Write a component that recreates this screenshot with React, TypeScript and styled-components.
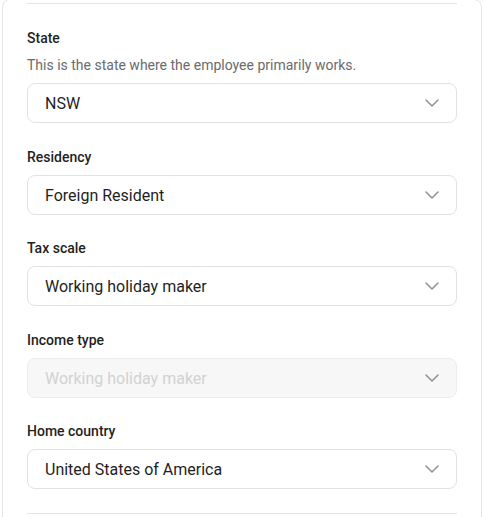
import React from "react";
import styled, { createGlobalStyle } from "styled-components";

const GlobalStyle = createGlobalStyle`
  body {
    margin: 0;
    background: #ffffff;
    font-family: Roboto, "Noto Sans", sans-serif;
  }
`;

type Field = {
  label: string;
  value: string;
  hint?: string;
  disabled?: boolean;
};

const fields: Field[] = [
  { label: "State", value: "NSW", hint: "This is the state where the employee primarily works." },
  { label: "Residency", value: "Foreign Resident" },
  { label: "Tax scale", value: "Working holiday maker" },
  { label: "Income type", value: "Working holiday maker", disabled: true },
  { label: "Home country", value: "United States of America" },
];

const Chevron = () => (
  <svg width="14" height="8" viewBox="0 0 14 8" fill="none">
    <path d="M1 1l6 6 6-6" stroke="#909090" strokeWidth="1.5" strokeLinecap="round" strokeLinejoin="round" />
  </svg>
);

export default function App() {
  return (
    <>
      <GlobalStyle />
      <Viewport>
        <Card>
          <Divider />
          <Fields>
            {fields.map((f) => (
              <FieldGroup key={f.label}>
                <Label>{f.label}</Label>
                {f.hint && <Hint>{f.hint}</Hint>}
                <Select $disabled={f.disabled}>
                  <Value>{f.value}</Value>
                  <Chevron />
                </Select>
              </FieldGroup>
            ))}
          </Fields>
          <Divider />
        </Card>
      </Viewport>
    </>
  );
}

const Viewport = styled.div`
  height: 517px;
  overflow: hidden;
`;

const Card = styled.div`
  margin: -1px 0 0 2px;
  width: 480px;
  min-height: 560px;
  border: 1px solid #e6e6e6;
  border-radius: 8px;
  padding: 3px 24px 0;
  box-sizing: border-box;
  background: #fff;
`;

const Divider = styled.div`
  height: 1px;
  background: #e4e4e4;
`;

const Fields = styled.div`
  display: flex;
  flex-direction: column;
  gap: 23.5px;
  padding: 24px 0 24px;
`;

const FieldGroup = styled.div`
  display: flex;
  flex-direction: column;
  gap: 8px;
`;

const Label = styled.label`
  font-size: 14px;
  line-height: 20px;
  font-weight: 500;
  color: #1f1f1f;
`;

const Hint = styled.p`
  margin: -1px 0 0;
  font-size: 14px;
  line-height: 20px;
  color: #6b6b6b;
`;

const Select = styled.div<{ $disabled?: boolean }>`
  height: 40px;
  box-sizing: border-box;
  display: flex;
  align-items: center;
  justify-content: space-between;
  padding: 0 17px 0 17px;
  border: 1px solid ${(p) => (p.$disabled ? "#ececec" : "#e2e2e2")};
  border-radius: 8px;
  background: ${(p) => (p.$disabled ? "#f7f7f7" : "#ffffff")};
  font-size: 16px;
  color: ${(p) => (p.$disabled ? "#d2d2d2" : "#1f1f1f")};
`;

const Value = styled.span`
  padding-top: 1px;
`;
